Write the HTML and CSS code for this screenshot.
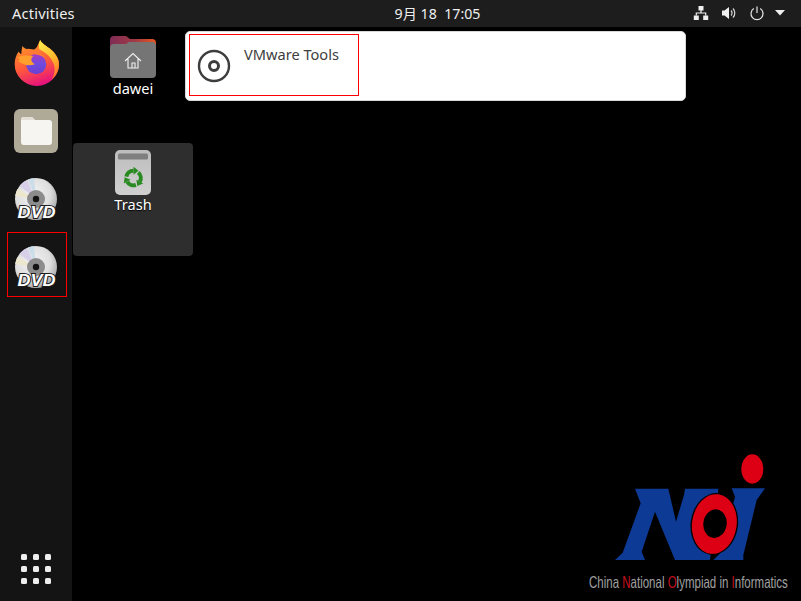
FILE: index.html
```html
<!DOCTYPE html>
<html lang="en">
<head>
<meta charset="utf-8">
<title>Ubuntu desktop</title>
<link rel="stylesheet" href="styles.css">
</head>
<body>
<svg class="defs" width="0" height="0" aria-hidden="true">
  <defs>
    <radialGradient id="discGrad" cx="42%" cy="38%" r="70%">
      <stop offset="0" stop-color="#f4f4f4"/>
      <stop offset="0.6" stop-color="#dedede"/>
      <stop offset="1" stop-color="#9c9c9c"/>
    </radialGradient>
    <linearGradient id="foxBody" x1="0.2" y1="0" x2="0.55" y2="1">
      <stop offset="0" stop-color="#ff9d26"/>
      <stop offset="0.55" stop-color="#ff5b3a"/>
      <stop offset="1" stop-color="#e5107f"/>
    </linearGradient>
    <linearGradient id="foxFlame" x1="0.3" y1="0" x2="0.7" y2="1">
      <stop offset="0" stop-color="#ffe84a"/>
      <stop offset="0.55" stop-color="#ffb52b"/>
      <stop offset="1" stop-color="#ff6f2c"/>
    </linearGradient>
    <linearGradient id="foxGlobe" x1="0.5" y1="0" x2="0.5" y2="1">
      <stop offset="0" stop-color="#a83ac4"/>
      <stop offset="0.5" stop-color="#6f4be0"/>
      <stop offset="1" stop-color="#6a3fd0"/>
    </linearGradient>
    <linearGradient id="folderTab" x1="0" y1="0" x2="1" y2="0">
      <stop offset="0" stop-color="#7f2c56"/>
      <stop offset="0.55" stop-color="#a33a45"/>
      <stop offset="1" stop-color="#e8561f"/>
    </linearGradient>
    <linearGradient id="trashBody" x1="0" y1="0" x2="0" y2="1">
      <stop offset="0" stop-color="#bdbdbd"/>
      <stop offset="1" stop-color="#d0d0d0"/>
    </linearGradient>
    <symbol id="dvd" viewBox="0 0 46 46">
      <circle cx="23" cy="23" r="21" fill="url(#discGrad)"/>
      <path d="M23 23 L6.500 10 A21 21 0 0 1 14 4 Z" fill="#d8d0e8"/>
      <path d="M23 23 L4.500 13 A21 21 0 0 0 2.200 20 Z" fill="#ece7cc"/>
      <path d="M23 23 L15 3.600 A21 21 0 0 1 21 2 Z" fill="#cbdde8"/>
      <circle cx="23" cy="23" r="9" fill="#8c8c8c"/>
      <circle cx="23" cy="23" r="3.200" fill="#141414"/>
      <text class="dvd-word" x="23.500" y="41.500" text-anchor="middle" textLength="38" lengthAdjust="spacingAndGlyphs">DVD</text>
    </symbol>
  </defs>
</svg>

<header class="topbar">
  <div class="topbar-left">Activities</div>
  <div class="topbar-clock">9月 18&nbsp;&nbsp;17:05</div>
  <div class="topbar-status">
    <svg class="status-icon" width="16" height="16" viewBox="0 0 16 16">
      <path d="M5.500 1h5v4.500h-5zM.8 10.500h5V15h-5zM10.200 10.500h5V15h-5z" fill="#f0f0f0"/>
      <path d="M8 5v3M3.300 10.500V8h9.400v2.500" fill="none" stroke="#f0f0f0" stroke-width="1.200"/>
    </svg>
    <svg class="status-icon" width="16" height="16" viewBox="0 0 16 16">
      <path d="M1 5.500h2.500L8 2v12L3.500 10.500H1z" fill="#f0f0f0"/>
      <path d="M10 5.500a3.500 3.500 0 0 1 0 5M12 3.500a6.500 6.500 0 0 1 0 9" fill="none" stroke="#d8d8d8" stroke-width="1.200"/>
    </svg>
    <svg class="status-icon" width="16" height="16" viewBox="0 0 16 16">
      <path d="M8 1.500v6.500M4.800 3.600a6 6 0 1 0 6.400 0" fill="none" stroke="#e4e4e4" stroke-width="1.200"/>
    </svg>
    <svg class="status-arrow" width="10" height="6" viewBox="0 0 10 6">
      <path d="M0 0h10L5 5.500z" fill="#f0f0f0"/>
    </svg>
  </div>
</header>

<div class="workspace">
  <nav class="dock">
    <div class="dock-item">
      <svg width="45" height="46" viewBox="0 0 134 137">
        <path d="M78 0C84 14 104 20 118 36C130 50 134 62 134 72A66 65 0 1 1 2 72C2 58 6 44 14 34C16 38 18 40 22 42C22 32 24 24 25 18C30 24 36 28 42 26L60 28C70 24 72 10 78 0Z" fill="url(#foxBody)"/>
        <path d="M78 0C84 14 104 20 118 36C130 50 134 62 134 72C134 90 126 106 112 118C122 100 124 82 116 66C108 48 92 36 76 28C72 18 74 8 78 0Z" fill="url(#foxFlame)"/>
        <circle cx="66" cy="72" r="30" fill="url(#foxGlobe)"/>
        <path d="M38 30C56 28 82 34 96 56C84 46 62 40 44 42C42 38 40 34 38 30Z" fill="#ff7a33"/>
        <path d="M10 52C26 44 44 46 58 48C48 56 50 66 62 72C48 78 26 76 12 62C20 60 18 56 10 52Z" fill="#ffa02c"/>
      </svg>
    </div>
    <div class="dock-item">
      <div class="files-icon">
        <svg width="33" height="30" viewBox="0 0 33 30">
          <path d="M1 4a3 3 0 0 1 3-3h8l3 3h14a3 3 0 0 1 3 3v19a3 3 0 0 1-3 3H4a3 3 0 0 1-3-3z" fill="#f7f5f2"/>
          <path d="M1 4a3 3 0 0 1 3-3h8l3 3z" fill="#e3dfd6"/>
        </svg>
      </div>
    </div>
    <div class="dock-item">
      <svg width="46" height="46"><use href="#dvd"/></svg>
    </div>
    <div class="dock-item dock-item-marked">
      <svg width="46" height="46"><use href="#dvd"/></svg>
    </div>
    <div class="dock-apps">
      <span></span><span></span><span></span>
      <span></span><span></span><span></span>
      <span></span><span></span><span></span>
    </div>
  </nav>

  <main class="desktop">
    <div class="desk-icon desk-home">
      <svg width="46" height="42" viewBox="0 0 46 42">
        <path d="M0 4a4 4 0 0 1 4-4h12l4 3h22a4 4 0 0 1 4 4v10H0z" fill="url(#folderTab)"/>
        <path d="M0 12a4 4 0 0 1 4-4h12l3-2h23a4 4 0 0 1 4 4v28a4 4 0 0 1-4 4H4a4 4 0 0 1-4-4z" fill="#757575"/>
        <path d="M15 25l8-7.500 8 7.500M18 23v9h10v-9M22 32v-5h3v5" fill="none" stroke="#f0f0f0" stroke-width="1.100"/>
      </svg>
      <span class="desk-label">dawei</span>
    </div>

    <div class="desk-icon desk-trash">
      <svg width="36" height="45" viewBox="0 0 36 45">
        <rect width="36" height="45" rx="5" fill="url(#trashBody)"/>
        <rect x="3" y="3.500" width="30" height="6" rx="1.500" fill="#7f7f7f"/>
        <g transform="translate(18.500 28) scale(1.120)" fill="#2a8a22">
          <g>
            <path d="M-6.400 -1.200A6.500 6.500 0 0 1 0 -6.500" fill="none" stroke="#2a8a22" stroke-width="3.600"/>
            <path d="M0 -10L4.500 -6.500 0 -3z"/>
          </g>
          <g transform="rotate(120)">
            <path d="M-6.400 -1.200A6.500 6.500 0 0 1 0 -6.500" fill="none" stroke="#2a8a22" stroke-width="3.600"/>
            <path d="M0 -10L4.500 -6.500 0 -3z"/>
          </g>
          <g transform="rotate(240)">
            <path d="M-6.400 -1.200A6.500 6.500 0 0 1 0 -6.500" fill="none" stroke="#2a8a22" stroke-width="3.600"/>
            <path d="M0 -10L4.500 -6.500 0 -3z"/>
          </g>
        </g>
      </svg>
      <span class="desk-label">Trash</span>
    </div>

    <div class="noi">
      <svg class="noi-mark" width="221" height="125" viewBox="0 0 663 375">
        <ellipse cx="517" cy="72" rx="33" ry="44" fill="#dd0014"/>
        <g transform="translate(90 105)">
          <path d="M75 26H175L198 125L222 45L225 26H325L300 240H195L135 95L95 215L105 240H15L38 218L92 70Z" fill="#0c3a94"/>
          <path d="M365 25H465L440 60L400 225V240H310L335 215L375 50Z" fill="#0c3a94"/>
          <ellipse cx="313" cy="132" rx="71" ry="93" transform="rotate(8 313 132)" fill="#000"/>
          <ellipse cx="313" cy="132" rx="67" ry="90" transform="rotate(8 313 132)" fill="#dd0014"/>
          <ellipse cx="315" cy="131" rx="35" ry="43" transform="rotate(8 315 131)" fill="#000"/>
        </g>
      </svg>
      <p class="noi-text">China <span class="noi-red">N</span>ational <span class="noi-red">O</span>lympiad in <span class="noi-red">I</span>nformatics</p>
    </div>

    <section class="notice">
      <div class="notice-marked">
        <svg class="notice-disc" width="34" height="34" viewBox="0 0 34 34">
          <circle cx="17" cy="17" r="15" fill="none" stroke="#3d3d3d" stroke-width="2.400"/>
          <circle cx="17" cy="17" r="4.500" fill="none" stroke="#3d3d3d" stroke-width="3"/>
        </svg>
        <span class="notice-title">VMware Tools</span>
      </div>
    </section>
  </main>
</div>
</body>
</html>
```
FILE: styles.css
```css
* {
  box-sizing: border-box;
}

html,
body {
  margin: 0;
  height: 100%;
  overflow: hidden;
}

body {
  display: flex;
  flex-direction: column;
  background: #000;
  font-family: "Noto Sans", "Noto Sans CJK SC", sans-serif;
  font-size: 14.6px;
  color: #fff;
}

.defs {
  position: absolute;
}

.topbar {
  flex: 0 0 27px;
  display: grid;
  grid-template-columns: 1fr auto 1fr;
  align-items: center;
  padding: 0 16px 2px 12px;
  background: #1d1d1d;
  color: #efefef;
}

.topbar-left {
  justify-self: start;
  letter-spacing: 0.2px;
}

.topbar-clock {
  padding-left: 78px;
  font-size: 14.2px;
}

.topbar-status {
  justify-self: end;
  display: flex;
  align-items: center;
  gap: 12px;
}

.status-arrow {
  margin-left: -1.500px;
}

.workspace {
  flex: 1;
  display: flex;
  min-height: 0;
}

.dock {
  flex: 0 0 72px;
  display: flex;
  flex-direction: column;
  align-items: center;
  padding-top: 4px;
  background: #141414;
}

.dock-item {
  position: relative;
  width: 60px;
  height: 64px;
  margin-bottom: 4px;
  display: flex;
  align-items: center;
  justify-content: center;
}

.dock-item-marked::after {
  content: "";
  box-sizing: border-box;
  position: absolute;
  left: 1px;
  top: -3px;
  width: 60px;
  height: 65px;
  border: 1px solid #f00;
}

.files-icon {
  width: 44px;
  height: 44px;
  padding-top: 7px;
  display: flex;
  justify-content: center;
  border-radius: 6px;
  background: #afa998;
}

.dock-apps {
  margin-top: auto;
  margin-bottom: 17px;
  display: grid;
  grid-template-columns: repeat(3, 6px);
  gap: 6px;
}

.dock-apps span {
  height: 6px;
  border-radius: 1.500px;
  background: #eee;
}

.desktop {
  flex: 1;
  position: relative;
}

.desk-icon {
  position: absolute;
  width: 120px;
  display: flex;
  flex-direction: column;
  align-items: center;
}

.desk-home {
  left: 1px;
  top: 9px;
}

.desk-trash {
  left: 1px;
  top: 116px;
  height: 113px;
  padding-top: 7px;
  border-radius: 4px;
  background: #2e2e2e;
}

.desk-label {
  line-height: 20px;
  text-shadow: 0 1px 1px #000;
}

.desk-trash .desk-label {
  margin-top: -1px;
}

.noi {
  position: absolute;
  left: 508px;
  top: 418px;
  width: 221px;
}

.noi-mark {
  display: block;
}

.noi-text {
  display: inline-block;
  margin: -1px 0 0 9px;
  white-space: nowrap;
  font-family: "Liberation Sans", sans-serif;
  font-size: 11.500px;
  line-height: 20px;
  color: #a0a0a0;
  transform: scaleY(1.38);
  transform-origin: left center;
}

.noi-red {
  color: #c8101c;
}

.notice {
  position: absolute;
  left: 113px;
  top: 4px;
  width: 501px;
  height: 70px;
  padding: 2px 3px;
  border-radius: 5px;
  background: #fff;
  border: 1px solid #d8d8d8;
}

.notice-marked {
  width: 170px;
  height: 62px;
  padding-left: 7px;
  display: flex;
  align-items: flex-start;
  border: 1px solid #f00;
}

.notice-disc {
  margin-top: 14px;
}

.notice-title {
  margin: 9px 0 0 13px;
  line-height: 20px;
  color: #3d3d3d;
}

.dvd-word {
  font-family: "Liberation Sans", sans-serif;
  font-weight: 700;
  font-style: italic;
  font-size: 17px;
  fill: #fff;
  stroke: #1c1c1c;
  stroke-width: 2px;
  paint-order: stroke;
}
```
